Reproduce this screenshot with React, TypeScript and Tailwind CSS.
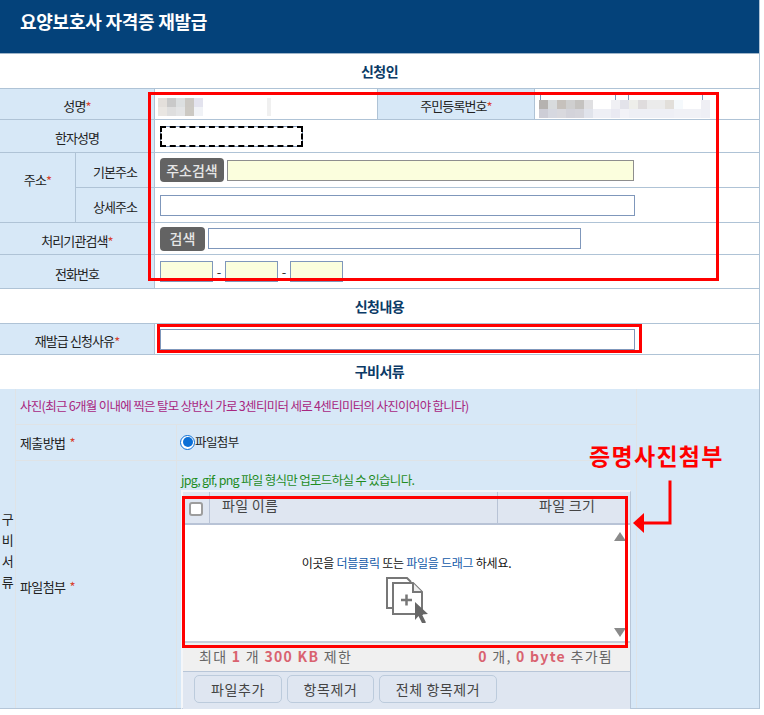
const KR = "font-['Malgun_Gothic','Noto_Sans_CJK_KR',sans-serif]";

function Star({ spaced }: { spaced?: boolean }) {
  return <span className={`inline-block translate-y-[1px] text-[#d9432f] ${spaced ? "ml-1" : ""}`}>*</span>;
}

function Label({ text, star, className = "" }: { text: string; star?: boolean; className?: string }) {
  return (
    <div className={`flex items-center justify-center bg-[#d7e8f7] text-[13px] tracking-[-0.9px] text-[#222] border-r border-[#afc3d6] ${className}`}>
      {text}
      {star && <Star />}
    </div>
  );
}

function Title({ text, className }: { text: string; className: string }) {
  return (
    <div className={`flex items-center justify-center bg-white text-[14px] font-bold tracking-[-0.5px] text-[#0b3a66] border-b border-[#afc3d6] ${className}`}>
      {text}
    </div>
  );
}

function Input({ className = "", yellow }: { className?: string; yellow?: boolean }) {
  return <div className={`h-[21px] border border-[#7f97bb] ${yellow ? "bg-[#fbfedd]" : "bg-white"} ${className}`} />;
}

function GrayButton({ text, className }: { text: string; className: string }) {
  return (
    <div className={`flex h-[24px] items-center justify-center rounded-[4px] bg-[#636363] text-[14px] font-medium text-[#e6e6e6] ${className}`}>
      {text}
    </div>
  );
}

function Mosaic({ rows, cell = 9 }: { rows: string[][]; cell?: number }) {
  return (
    <div>
      {rows.map((r, i) => (
        <div key={i} className="flex">
          {r.map((c, j) => (
            <div key={j} style={{ backgroundColor: c, width: cell, height: cell }} />
          ))}
        </div>
      ))}
    </div>
  );
}

function FileButton({ text, className }: { text: string; className: string }) {
  return (
    <div className={`flex h-[28px] items-center justify-center rounded-[5px] border border-[#bccbdc] bg-[#dfe6f1] text-[14px] tracking-[0.6px] text-[#444] ${className}`}>
      {text}
    </div>
  );
}

function RedBox({ className }: { className: string }) {
  return <div className={`pointer-events-none absolute border-[3px] border-[#ff0000] ${className}`} />;
}

function FilesIcon() {
  return (
    <svg width="44" height="46" viewBox="0 0 44 46" fill="none" className="mx-auto">
      <path d="M13 1H2v30h6" stroke="#777" strokeWidth="2" fill="#fff" />
      <path d="M2 1h20l4 4" stroke="#777" strokeWidth="2" />
      <path d="M8 6h20l9 9v22H8z" stroke="#777" strokeWidth="2" fill="#fff" />
      <path d="M28 6v9h9" stroke="#777" strokeWidth="2" fill="#eee" />
      <path d="M16 23h11M21.500 17.500v11" stroke="#777" strokeWidth="2.500" />
      <path d="M30 25l13 12-6 .5 4 8-3.500 1.500-4-8-3.500 4z" fill="#666" />
    </svg>
  );
}

export default function App() {
  return (
    <div className={`relative h-[715px] w-[764px] overflow-hidden bg-white ${KR}`}>
      <div className="w-[760px] border-r border-[#afc3d6]">
        <div className="flex h-[54px] items-start border-b border-[#9fb5c9] bg-[#04427a] pl-5 pt-[6px] text-[18px] font-bold leading-[30px] tracking-[-0.25px] text-white">
          요양보호사 자격증 재발급
        </div>
        <Title text="신청인" className="h-[35px]" />

        <div className="flex h-[31px] border-b border-[#afc3d6]">
          <Label text="성명" star className="w-[155px] pt-1" />
          <div className="flex w-[222px] items-center pl-[5px]">
            <div className="relative h-[21px] w-[110px] border-b border-[#999]">
              <div className="absolute left-[-2px] top-[4px] flex">
                <Mosaic rows={[["#e3dfdb", "#c9c9c9", "#dcdfe0", "#cbc8c3", "#e3e3ee"], ["#e9e6e2", "#dedede", "#e3e4e5", "#ccc9c3", "#f0f2f6"]]} />
                <div className="h-[18px] w-[64px] bg-white" />
                <div className="h-[18px] w-[4px] bg-[#f0f0f0]" />
              </div>
            </div>
          </div>
          <Label text="주민등록번호" star className="w-[158px] border-l pt-1" />
          <div className="relative flex flex-1 items-center gap-[12px] pl-[5px]">
            <Input className="w-[76px]" />
            <Input className="w-[75px]" />
            <div className="absolute left-[4px] top-[11px]">
              <Mosaic
                cell={9}
                rows={[
                  ["#b5b2b0", "#d8dbdd", "#c6c1bc", "#cfcfcf", "#c5c3c0", "#e0e0e2", "#ffffff", "#ffffff", "#f0f0f4", "#e3e3ea", "#eeeeea", "#dfdcdd", "#ebebeb", "#ebebeb", "#e2dfda", "#f5f9fc", "#ffffff", "#ffffff", "#efeff4"],
                  ["#cdcdd6", "#d6d8e0", "#d9d9de", "#d3d3da", "#d5d5db", "#e0e3eb", "#eeeff5", "#eeeff5", "#e9e9f2", "#f2f2f7", "#eeeff5", "#eeeff5", "#eeeff5", "#eeeff5", "#eeeff5", "#f0f1f6", "#f0f1f6", "#f0f1f6", "#eeeff5"],
                ]}
              />
            </div>
          </div>
        </div>

        <div className="flex h-[33px] border-b border-[#afc3d6]">
          <Label text="한자성명" className="w-[155px] pt-1" />
          <div className="flex items-center pl-[5px]">
            <div className="h-[21px] w-[143px] border border-[#7f97bb] bg-white outline-2 -outline-offset-2 outline-dashed outline-black" />
          </div>
        </div>

        <div className="flex h-[70px] border-b border-[#afc3d6]">
          <Label text="주소" star className="w-[76px] pb-[16px]" />
          <div className="flex-1">
            <div className="flex h-[35px] border-b border-[#afc3d6]">
              <Label text="기본주소" className="w-[79px] pt-1" />
              <div className="flex items-center gap-[3px] pl-[5px]">
                <GrayButton text="주소검색" className="w-[64px]" />
                <Input yellow className="w-[407px] border-[#8e8e8e]" />
              </div>
            </div>
            <div className="flex h-[34px]">
              <Label text="상세주소" className="w-[79px] pt-1" />
              <div className="flex items-center pl-[5px]">
                <Input className="w-[475px]" />
              </div>
            </div>
          </div>
        </div>

        <div className="flex h-[32px] border-b border-[#afc3d6]">
          <Label text="처리기관검색" star className="w-[155px] pt-1" />
          <div className="flex items-center gap-[3px] pl-[5px]">
            <GrayButton text="검색" className="w-[45px]" />
            <Input className="w-[373px]" />
          </div>
        </div>

        <div className="flex h-[34px] border-b border-[#afc3d6]">
          <Label text="전화번호" className="w-[155px] pt-1" />
          <div className="flex items-center pl-[5px] text-[13px] text-[#333]">
            <Input yellow className="w-[53px]" />
            <span className="w-[12px] text-center">-</span>
            <Input yellow className="w-[53px]" />
            <span className="w-[12px] text-center">-</span>
            <Input yellow className="w-[53px]" />
          </div>
        </div>

        <Title text="신청내용" className="h-[35px]" />

        <div className="flex h-[31px] border-b border-[#afc3d6]">
          <Label text="재발급 신청사유" star className="w-[155px] pt-1" />
          <div className="flex items-center pl-[5px]">
            <Input className="w-[475px]" />
          </div>
        </div>

        <div className="flex h-[34px] items-center justify-center bg-white pb-[1px] text-[14px] font-bold tracking-[-0.5px] text-[#0b3a66]">
          구비서류
        </div>

        <div className="flex h-[320px] border-b border-[#b5c6d8] bg-[#d7e8f7] text-[13px] tracking-[-0.6px] text-[#222]">
          <div className="flex w-[16px] flex-col items-center justify-center gap-[2px] border-r border-[#dfe3e6] pt-[3px] text-[13px] leading-[19px]">
            <span>구</span>
            <span>비</span>
            <span>서</span>
            <span>류</span>
          </div>
          <div className="w-[621px] border-r border-[#dfe3e6]">
            <div className="flex h-[36px] items-center border-b border-[#dfe3e6] pl-[4px] text-[12.500px] tracking-[-0.7px] text-[#a8267f]">
              사진(최근 6개월 이내에 찍은 탈모 상반신 가로 3센티미터 세로 4센티미터의 사진이어야 합니다)
            </div>
            <div className="flex h-[36px] border-b border-[#dfe3e6]">
              <div className="flex w-[161px] items-center border-r border-[#dfe3e6] pl-[4px]">
                제출방법<span className="ml-1 text-[#d9432f]">*</span>
              </div>
              <div className="flex items-center pl-[3px] pb-[1px] text-[12.500px]">
                <span className="flex h-[15px] w-[15px] items-center justify-center rounded-full border border-[#0b6fd6] bg-white">
                  <span className="h-[10px] w-[10px] rounded-full bg-[#0b6fd6]" />
                </span>
                파일첨부
              </div>
            </div>
            <div className="flex h-[247px]">
              <div className="flex w-[161px] items-center border-r border-[#dfe3e6] pl-[4px] pt-[5px]">
                파일첨부<span className="ml-1 text-[#d9432f]">*</span>
              </div>
              <div className="pl-[4px] pt-[9px]">
                <div className="h-[20px] text-[12.500px] leading-[20px] tracking-[-0.7px] text-[#1f8c1f]">
                  jpg, gif, png 파일 형식만 업로드하실 수 있습니다.
                </div>
                <div className="h-[219px] w-[450px] border border-l-2 border-t-2 border-[#f4f6f9] border-b-[#b8c6d8] border-r-[#b8c6d8] tracking-normal">
                  <div className="flex h-[33px] border-b-2 border-[#b8c3d6] bg-[#dfe6f1] text-[14px] tracking-[0.3px] text-[#444]">
                    <div className="flex w-[27px] items-center justify-center border-r border-[#b8c3d6] pt-[2px]">
                      <span className="h-[14px] w-[14px] rounded-[3px] border-2 border-[#9d9d9d] bg-white" />
                    </div>
                    <div className="w-[288px] border-r border-[#b8c3d6] pl-[12px] leading-[26px]">파일 이름</div>
                    <div className="flex-1 pl-[41px] leading-[26px]">파일 크기</div>
                  </div>
                  <div className="relative h-[118px] border-b-2 border-[#c8cfdb] bg-white">
                    <div className="pt-[29px] text-center text-[12px] tracking-[-0.25px] text-[#111]">
                      이곳을 <span className="text-[#1259a8]">더블클릭</span> 또는 <span className="text-[#1259a8]">파일을 드래그</span> 하세요.
                    </div>
                    <div className="mt-[5px]">
                      <FilesIcon />
                    </div>
                    <div className="absolute right-[4px] top-[7px] h-0 w-0 border-x-[6px] border-b-[9px] border-x-transparent border-b-[#8a8a8a]" />
                    <div className="absolute bottom-[4px] right-[4px] h-0 w-0 border-x-[6px] border-t-[9px] border-x-transparent border-t-[#8a8a8a]" />
                  </div>
                  <div className="flex h-[29px] items-center justify-between border-b border-[#b8c6d8] bg-[#f0f0f0] pb-[2px] pl-[16px] pr-[17px] text-[14px] tracking-[1.3px] text-[#666]">
                    <div>
                      최대 <b className="text-[#d9626f]">1</b> 개 <b className="text-[#d9626f]">300 KB</b> 제한
                    </div>
                    <div>
                      <b className="text-[#d9626f]">0</b> 개, <b className="text-[#d9626f]">0 byte</b> 추가됨
                    </div>
                  </div>
                  <div className="flex h-[37px] items-center gap-[5px] bg-[#dfe6f1] pb-[3px] pl-[11px]">
                    <FileButton text="파일추가" className="w-[88px]" />
                    <FileButton text="항목제거" className="w-[87px]" />
                    <FileButton text="전체 항목제거" className="w-[118px]" />
                  </div>
                </div>
              </div>
            </div>
          </div>
        </div>
      </div>

      <RedBox className="left-[148px] top-[92px] h-[189px] w-[571px]" />
      <RedBox className="left-[157px] top-[324px] h-[29px] w-[485px]" />
      <RedBox className="left-[182px] top-[496px] h-[152px] w-[446px]" />

      <div className="absolute left-[589px] top-[438px] text-[23px] font-bold leading-[34px] tracking-[1.3px] text-[#ff0000]">
        증명사진첨부
      </div>
      <svg className="absolute left-[630px] top-[478px]" width="46" height="60" viewBox="0 0 46 60" fill="none">
        <path d="M40 2.500V45H12" stroke="#ff0000" strokeWidth="3" />
        <path d="M3 45l11-10v20z" fill="#ff0000" />
      </svg>
    </div>
  );
}
